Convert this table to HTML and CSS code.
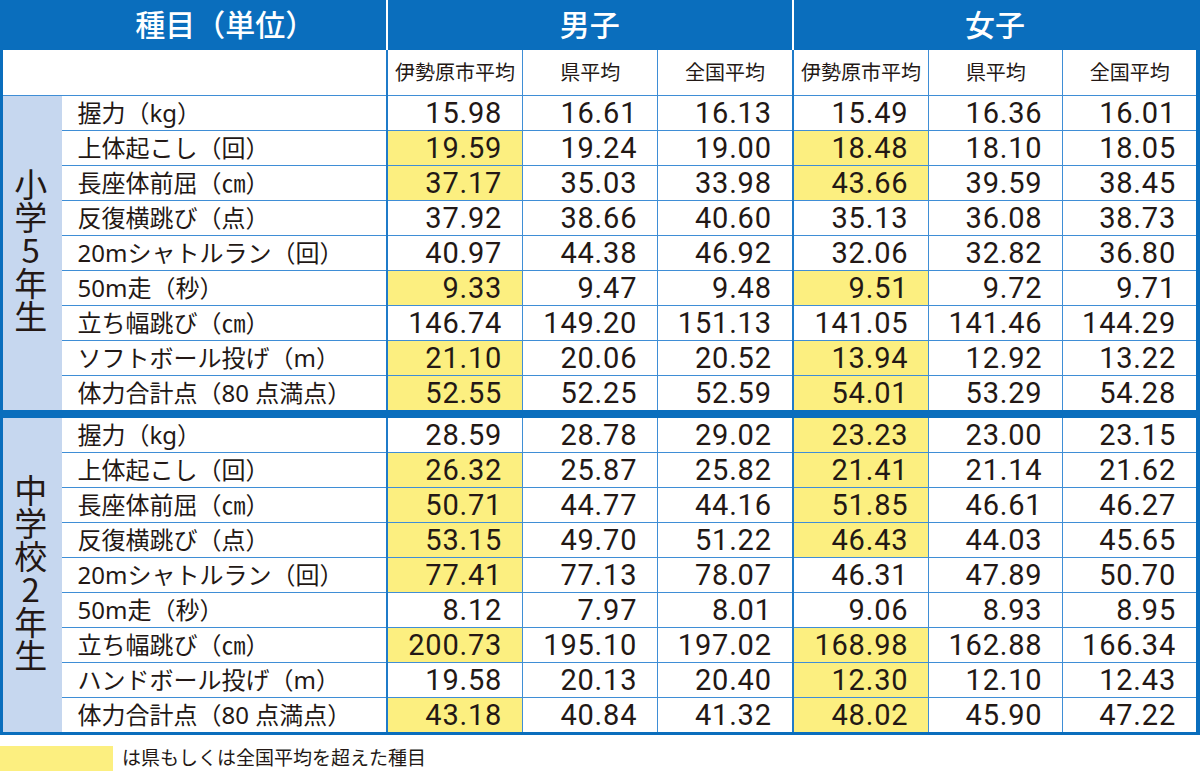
FILE: index.html
```html
<!DOCTYPE html>
<html lang="ja">
<head>
<meta charset="utf-8">
<title>体力テスト結果</title>
<link rel="stylesheet" href="styles.css">
</head>
<body>
<table class="tbl">
  <colgroup>
    <col class="c-grp"><col class="c-item">
    <col class="c-m1"><col class="c-m2"><col class="c-m3">
    <col class="c-f1"><col class="c-f2"><col class="c-f3">
  </colgroup>
  <thead>
    <tr class="h1">
      <th colspan="2" class="title">種目（単位）</th>
      <th colspan="3" class="sec">男子</th>
      <th colspan="3" class="sec">女子</th>
    </tr>
    <tr class="h2">
      <th colspan="2" class="blank"></th>
      <th class="sec">伊勢原市平均</th><th>県平均</th><th>全国平均</th>
      <th class="sec">伊勢原市平均</th><th>県平均</th><th>全国平均</th>
    </tr>
  </thead>
  <tbody>
    <tr>
      <th rowspan="9" class="grp"><span class="vt">小学5年生</span></th>
      <td class="item">握力（kg）</td>
      <td class="n sec">15.98</td><td class="n">16.61</td><td class="n">16.13</td>
      <td class="n sec">15.49</td><td class="n">16.36</td><td class="n">16.01</td>
    </tr>
    <tr>
      <td class="item">上体起こし（回）</td>
      <td class="n sec hi">19.59</td><td class="n">19.24</td><td class="n">19.00</td>
      <td class="n sec hi">18.48</td><td class="n">18.10</td><td class="n">18.05</td>
    </tr>
    <tr>
      <td class="item">長座体前屈（㎝）</td>
      <td class="n sec hi">37.17</td><td class="n">35.03</td><td class="n">33.98</td>
      <td class="n sec hi">43.66</td><td class="n">39.59</td><td class="n">38.45</td>
    </tr>
    <tr>
      <td class="item">反復横跳び（点）</td>
      <td class="n sec">37.92</td><td class="n">38.66</td><td class="n">40.60</td>
      <td class="n sec">35.13</td><td class="n">36.08</td><td class="n">38.73</td>
    </tr>
    <tr>
      <td class="item">20mシャトルラン（回）</td>
      <td class="n sec">40.97</td><td class="n">44.38</td><td class="n">46.92</td>
      <td class="n sec">32.06</td><td class="n">32.82</td><td class="n">36.80</td>
    </tr>
    <tr>
      <td class="item">50m走（秒）</td>
      <td class="n sec hi">9.33</td><td class="n">9.47</td><td class="n">9.48</td>
      <td class="n sec hi">9.51</td><td class="n">9.72</td><td class="n">9.71</td>
    </tr>
    <tr>
      <td class="item">立ち幅跳び（㎝）</td>
      <td class="n sec">146.74</td><td class="n">149.20</td><td class="n">151.13</td>
      <td class="n sec">141.05</td><td class="n">141.46</td><td class="n">144.29</td>
    </tr>
    <tr>
      <td class="item">ソフトボール投げ（m）</td>
      <td class="n sec hi">21.10</td><td class="n">20.06</td><td class="n">20.52</td>
      <td class="n sec hi">13.94</td><td class="n">12.92</td><td class="n">13.22</td>
    </tr>
    <tr>
      <td class="item">体力合計点（80 点満点）</td>
      <td class="n sec hi">52.55</td><td class="n">52.25</td><td class="n">52.59</td>
      <td class="n sec hi">54.01</td><td class="n">53.29</td><td class="n">54.28</td>
    </tr>

    <tr class="gstart">
      <th rowspan="9" class="grp"><span class="vt">中学校2年生</span></th>
      <td class="item">握力（kg）</td>
      <td class="n sec">28.59</td><td class="n">28.78</td><td class="n">29.02</td>
      <td class="n sec hi">23.23</td><td class="n">23.00</td><td class="n">23.15</td>
    </tr>
    <tr>
      <td class="item">上体起こし（回）</td>
      <td class="n sec hi">26.32</td><td class="n">25.87</td><td class="n">25.82</td>
      <td class="n sec hi">21.41</td><td class="n">21.14</td><td class="n">21.62</td>
    </tr>
    <tr>
      <td class="item">長座体前屈（㎝）</td>
      <td class="n sec hi">50.71</td><td class="n">44.77</td><td class="n">44.16</td>
      <td class="n sec hi">51.85</td><td class="n">46.61</td><td class="n">46.27</td>
    </tr>
    <tr>
      <td class="item">反復横跳び（点）</td>
      <td class="n sec hi">53.15</td><td class="n">49.70</td><td class="n">51.22</td>
      <td class="n sec hi">46.43</td><td class="n">44.03</td><td class="n">45.65</td>
    </tr>
    <tr>
      <td class="item">20mシャトルラン（回）</td>
      <td class="n sec hi">77.41</td><td class="n">77.13</td><td class="n">78.07</td>
      <td class="n sec">46.31</td><td class="n">47.89</td><td class="n">50.70</td>
    </tr>
    <tr>
      <td class="item">50m走（秒）</td>
      <td class="n sec">8.12</td><td class="n">7.97</td><td class="n">8.01</td>
      <td class="n sec">9.06</td><td class="n">8.93</td><td class="n">8.95</td>
    </tr>
    <tr>
      <td class="item">立ち幅跳び（㎝）</td>
      <td class="n sec hi">200.73</td><td class="n">195.10</td><td class="n">197.02</td>
      <td class="n sec hi">168.98</td><td class="n">162.88</td><td class="n">166.34</td>
    </tr>
    <tr>
      <td class="item">ハンドボール投げ（m）</td>
      <td class="n sec">19.58</td><td class="n">20.13</td><td class="n">20.40</td>
      <td class="n sec hi">12.30</td><td class="n">12.10</td><td class="n">12.43</td>
    </tr>
    <tr>
      <td class="item">体力合計点（80 点満点）</td>
      <td class="n sec hi">43.18</td><td class="n">40.84</td><td class="n">41.32</td>
      <td class="n sec hi">48.02</td><td class="n">45.90</td><td class="n">47.22</td>
    </tr>
  </tbody>
</table>
<div class="legend">
  <span class="swatch"></span>
  <span class="legend-text">は県もしくは全国平均を超えた種目</span>
</div>
</body>
</html>
```

FILE: styles.css
```css
html, body {
  margin: 0;
  padding: 0;
  background: #ffffff;
}
body {
  width: 1200px;
  font-family: "Noto Sans", "Noto Sans CJK JP", sans-serif;
  color: #231815;
}
.tbl {
  width: 1200px;
  table-layout: fixed;
  border-collapse: collapse;
  border-left: 3px solid #0a6ebd;
  border-right: 4px solid #0a6ebd;
  border-bottom: 3px solid #0a6ebd;
}
.c-grp { width: 60px; }
.c-item { width: 325px; }
.c-m1 { width: 136px; }
.c-m2 { width: 135px; }
.c-m3 { width: 135px; }
.c-f1 { width: 136px; }
.c-f2 { width: 134px; }
.c-f3 { width: 135px; }

.tbl th, .tbl td {
  padding: 0;
  border: 1px solid #3f8ed6;
}
.h1 th {
  height: 50px;
  background: #0a6ebd;
  color: #ffffff;
  font-size: 30px;
  font-weight: 500;
  border-top: 0;
  border-bottom: 0;
  border-left: 0;
  border-right: 0;
  line-height: 1;
}
.h1 th.title {
  padding-left: 62px;
}
.h1 th.sec {
  border-left: 2px solid #ffffff;
}
.h2 th {
  height: 45px;
  font-size: 20px;
  font-weight: 400;
  line-height: 1;
  background: #ffffff;
  border-top: 0;
}
.tbl .sec {
  border-left: 2px solid #1f7bc9;
}
.h2 th.blank {
  border-left: 3px solid #0a6ebd;
}
.tbl td {
  height: 34px;
  line-height: 1;
}
.tbl td.item {
  font-size: 24px;
  padding-left: 16px;
  text-align: left;
  white-space: nowrap;
  border-left: 0;
}
.tbl td.n {
  font-family: Roboto, "Noto Sans", sans-serif;
  font-size: 29px;
  letter-spacing: 0.8px;
  text-align: right;
  padding-right: 20px;
}
.tbl td.hi {
  background: #fcef80;
}
.tbl th.grp {
  background: #c6d7ef;
  border-top: 1px solid #3f8ed6;
  border-right: 0;
  border-bottom: 0;
  border-left: 3px solid #0a6ebd;
  font-weight: 400;
  vertical-align: middle;
}
.vt {
  display: inline-block;
  writing-mode: vertical-rl;
  text-orientation: upright;
  font-family: "Noto Sans CJK JP", sans-serif;
  font-size: 33px;
  line-height: 1;
  margin-right: 4px;
}
.gstart th, .gstart td,
.tbl .gstart th.grp {
  border-top: 8px solid #0a6ebd;
}
.legend {
  display: flex;
  align-items: center;
  gap: 9px;
  margin-top: 11px;
}
.swatch {
  width: 113px;
  height: 25px;
  background: #fcef80;
}
.legend-text {
  font-size: 19px;
  line-height: 25px;
}
```
